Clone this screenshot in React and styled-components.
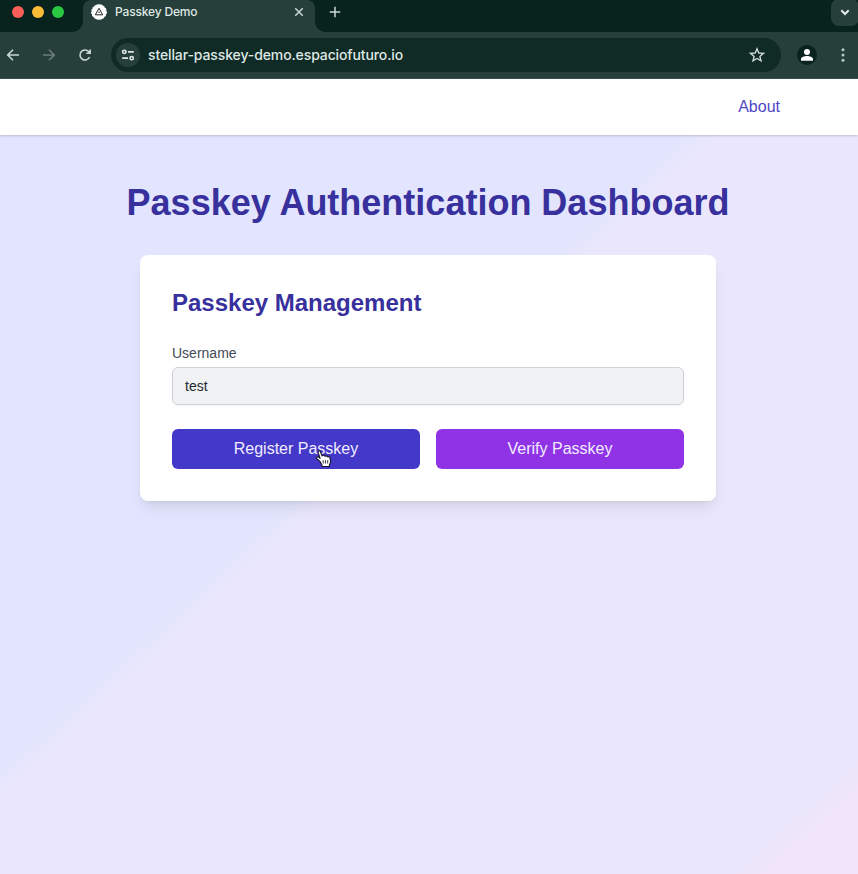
import React from "react";
import styled, { createGlobalStyle } from "styled-components";

const GlobalStyle = createGlobalStyle`
  *, *::before, *::after { box-sizing: border-box; }
  body { margin: 0; overflow: hidden; font-family: "Liberation Sans", Arial, sans-serif; }
  h1, h2 { margin: 0; }
  button, input { font: inherit; }
`;

const Window = styled.div`
  width: 858px;
  height: 874px;
  overflow: hidden;
  display: flex;
  flex-direction: column;
`;

const TabStrip = styled.div`
  height: 32px;
  flex: none;
  background: #08221e;
  display: flex;
  align-items: flex-start;
`;

const TrafficLights = styled.div`
  width: 83px;
  height: 24px;
  padding-left: 12px;
  display: flex;
  align-items: center;
  gap: 8px;
`;

const Light = styled.span`
  width: 12px;
  height: 12px;
  border-radius: 50%;
  background: ${(p) => p.$color};
`;

const Tab = styled.div`
  position: relative;
  width: 232px;
  height: 32px;
  padding: 0 10px 8px 8px;
  background: #263f3b;
  border-radius: 8px 8px 0 0;
  display: flex;
  align-items: center;
  color: #dfe8e5;
  font: 500 12px/24px Inter, sans-serif;

  &::before, &::after {
    content: "";
    position: absolute;
    bottom: 0;
    width: 10px;
    height: 10px;
  }
  &::before {
    right: 100%;
    background: radial-gradient(circle at 0 0, transparent 9.5px, #263f3b 10px);
  }
  &::after {
    left: 100%;
    background: radial-gradient(circle at 100% 0, transparent 9.5px, #263f3b 10px);
  }
`;

const TabTitle = styled.span`
  flex: 1;
  margin-left: 8px;
  letter-spacing: -0.16px;
`;

const NewTab = styled.div`
  width: 40px;
  height: 24px;
  display: flex;
  align-items: center;
  justify-content: center;
`;

const TabSearch = styled.div`
  width: 28px;
  height: 27px;
  margin-left: auto;
  margin-top: -1px;
  margin-right: -1px;
  padding-bottom: 1px;
  border-radius: 8px;
  background: #263f3b;
  display: flex;
  align-items: center;
  justify-content: center;
`;

const Toolbar = styled.div`
  height: 47px;
  flex: none;
  background: #263f3b;
  border-bottom: 1px solid #3c504d;
  display: flex;
  align-items: center;
  padding: 0 6px 0 5px;
`;

const NavIcons = styled.div`
  width: 106px;
  display: flex;
  gap: 20px;
`;

const AddressBar = styled.div`
  width: 670px;
  height: 34px;
  border-radius: 17px;
  background: #102a26;
  display: flex;
  align-items: center;
  padding: 0 16px 0 5px;
`;

const SiteInfo = styled.div`
  width: 24px;
  height: 24px;
  border-radius: 50%;
  background: #263f3b;
  display: flex;
  align-items: center;
  justify-content: center;
`;

const Url = styled.span`
  flex: 1;
  margin-left: 8px;
  color: #dfe8e5;
  font: 500 14px/20px Inter, sans-serif;
  letter-spacing: -0.115px;
`;

const Profile = styled.div`
  width: 20px;
  height: 20px;
  margin: 0 18px 0 16px;
  border-radius: 50%;
  background: #08221e;
`;

const Page = styled.div`
  flex: 1;
  background: linear-gradient(to bottom right, #e2e5fd 43.5%, #eae7fc 45.5%, #eae7fc 92.5%, #f0e5fa 94.5%);
`;

const Header = styled.header`
  height: 56px;
  padding: 0 78px;
  background: #fff;
  box-shadow: 0 1px 2px rgba(0, 0, 0, 0.18);
  display: flex;
  align-items: center;
  justify-content: flex-end;
`;

const AboutLink = styled.a`
  color: #5046c8;
  font-size: 16px;
  line-height: 24px;
`;

const Main = styled.main`
  padding: 48px 2px 0 0;
  display: flex;
  flex-direction: column;
  align-items: center;
`;

const Title = styled.h1`
  color: #37309d;
  font-size: 36px;
  line-height: 40px;
  margin-bottom: 32px;
  white-space: nowrap;
`;

const Card = styled.section`
  width: 576px;
  height: 246px;
  padding: 32px;
  background: #fff;
  border-radius: 8px;
  box-shadow: 0 10px 15px -3px rgba(0, 0, 0, 0.08), 0 4px 6px -4px rgba(0, 0, 0, 0.1);
`;

const CardTitle = styled.h2`
  color: #37309d;
  font-size: 24px;
  line-height: 32px;
  margin-bottom: 24px;
`;

const Label = styled.label`
  display: block;
  color: #434a56;
  font-size: 14px;
  line-height: 20px;
  margin-bottom: 4px;
`;

const Input = styled.input`
  display: block;
  width: 100%;
  height: 38px;
  padding: 0 12px;
  border: 1px solid #cfd3d9;
  border-radius: 6px;
  background: #f0f2f4;
  box-shadow: 0 1px 2px rgba(0, 0, 0, 0.05);
  color: #24282c;
  font-size: 14px;
`;

const Actions = styled.div`
  margin-top: 24px;
  display: grid;
  grid-template-columns: 1fr 1fr;
  gap: 16px;
`;

const Button = styled.button`
  position: relative;
  height: 40px;
  padding: 0;
  border: 0;
  border-radius: 6px;
  background: ${(p) => p.$color};
  color: #f1edff;
  font-size: 16px;
`;

const Cursor = styled.svg`
  position: absolute;
  left: 143px;
  top: 20px;
`;

const Stroke = ({ size = 16, color = "#c9d8d3", width = 1.6, children, ...rest }) => (
  <svg width={size} height={size} viewBox="0 0 16 16" fill="none" stroke={color} strokeWidth={width} {...rest}>
    {children}
  </svg>
);

const Favicon = () => (
  <svg width="16" height="16" viewBox="0 0 16 16">
    <circle cx="8" cy="8" r="7.4" fill="#fff" stroke="#fff" strokeWidth="1" strokeDasharray="2 1" />
    <path d="M8 4.3 11.7 10.8H4.3Z" fill="none" stroke="#222" strokeWidth="1" />
    <path d="M8 7 9.3 9H6.7Z" fill="#777" />
  </svg>
);

export default function App() {
  return (
    <>
      <GlobalStyle />
      <Window>
        <TabStrip>
          <TrafficLights>
            <Light $color="#fb5f57" />
            <Light $color="#fdbc37" />
            <Light $color="#29c944" />
          </TrafficLights>
          <Tab>
            <Favicon />
            <TabTitle>Passkey Demo</TabTitle>
            <Stroke size={12}><path d="M3 3 13 13M13 3 3 13" strokeWidth="2" /></Stroke>
          </Tab>
          <NewTab>
            <Stroke size={12}><path d="M8 1V15M1 8H15" strokeWidth="2" /></Stroke>
          </NewTab>
          <TabSearch>
            <Stroke size={16} color="#e5eeeb" width={2}><path d="M4.3 6.3 8 10 11.7 6.3" /></Stroke>
          </TabSearch>
        </TabStrip>

        <Toolbar>
          <NavIcons>
            <Stroke><path d="M14 8H3M8 2.7 2.7 8 8 13.3" /></Stroke>
            <Stroke color="#6c7f7a"><path d="M2 8H13M8 2.7 13.3 8 8 13.3" /></Stroke>
            <Stroke><path d="M12.6 10A5 5 0 1 1 11.7 4.6L13 6M13.2 2.5V6.3H9.3" /></Stroke>
          </NavIcons>
          <AddressBar>
            <SiteInfo>
              <Stroke size={14} color="#dfe8e5" width={1.8}>
                <circle cx="3.8" cy="4.4" r="1.9" />
                <path d="M8 4.4H14.6M1.4 11.6H8" />
                <circle cx="12.2" cy="11.6" r="1.9" />
              </Stroke>
            </SiteInfo>
            <Url>stellar-passkey-demo.espaciofuturo.io</Url>
            <Stroke width={1.4}>
              <path d="M8 1.8 9.8 6 14.4 6.4 10.9 9.4 12 13.9 8 11.5 4 13.9 5.1 9.4 1.6 6.4 6.2 6Z" />
            </Stroke>
          </AddressBar>
          <Profile>
            <svg width="20" height="20" viewBox="0 0 20 20" fill="#fff">
              <circle cx="10" cy="7" r="3" />
              <path d="M4 15.8V14c0-2 3.5-3 6-3s6 1 6 3v1.8Z" />
            </svg>
          </Profile>
          <svg width="16" height="16" viewBox="0 0 16 16" fill="#b9cbc5">
            <circle cx="8" cy="2.8" r="1.5" />
            <circle cx="8" cy="8" r="1.5" />
            <circle cx="8" cy="13.2" r="1.5" />
          </svg>
        </Toolbar>

        <Page>
          <Header>
            <AboutLink>About</AboutLink>
          </Header>
          <Main>
            <Title>Passkey Authentication Dashboard</Title>
            <Card>
              <CardTitle>Passkey Management</CardTitle>
              <Label htmlFor="username">Username</Label>
              <Input id="username" defaultValue="test" />
              <Actions>
                <Button $color="#4338c8">
                  Register Passkey
                  <Cursor width="18" height="19" viewBox="0 0 16 17">
                    <path
                      d="M4.2 10.8 1.6 8.7C.7 7.6 1.8 6.6 2.9 7.2L4.5 8.4 2.8 3.2C2.4 1.5 4.2 1 4.8 2.4L6.3 6.2C7 5.3 8.4 5.5 8.8 6.5 9.7 5.8 10.8 6.1 11.1 7 12.2 6.5 13.2 7 13.4 8.2L14 11.5 12.9 14.2V15.6H6.2V14.4Z"
                      fill="#fff" stroke="#17172c" strokeWidth="1" strokeLinejoin="round"
                    />
                    <path d="M7.3 10V13M9.3 10V13M11.3 10V13" stroke="#17172c" strokeWidth=".8" />
                  </Cursor>
                </Button>
                <Button $color="#9033e6">Verify Passkey</Button>
              </Actions>
            </Card>
          </Main>
        </Page>
      </Window>
    </>
  );
}
